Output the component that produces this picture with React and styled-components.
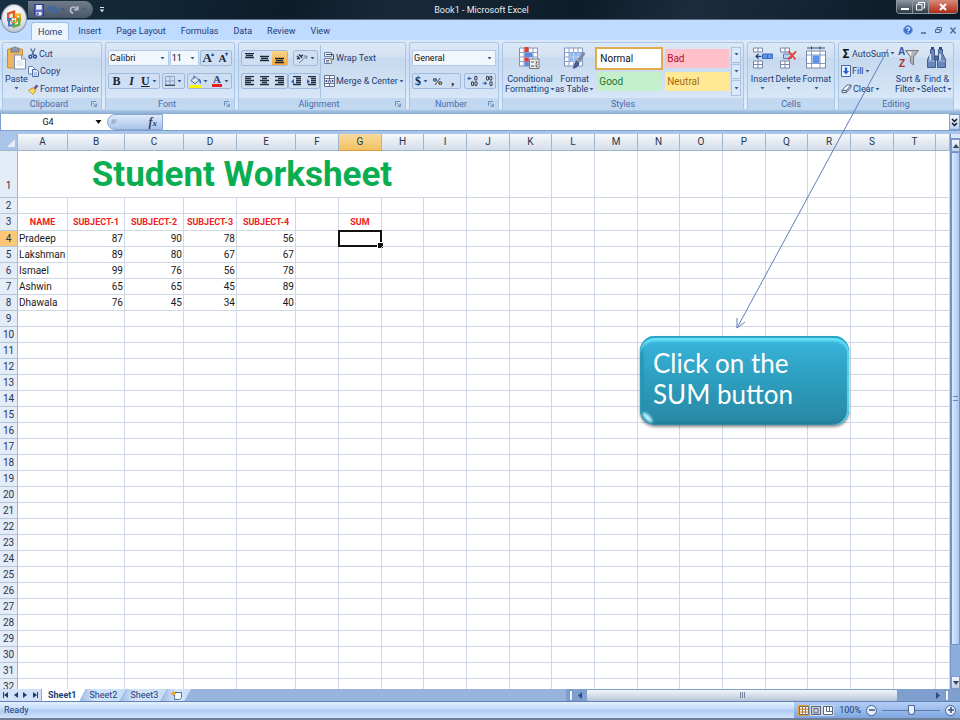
import React, { useState } from 'react'
import styled, { createGlobalStyle } from 'styled-components'

const uiFont = 'Roboto, "Liberation Sans", sans-serif'

const rows = [
  ['Pradeep', 87, 90, 78, 56],
  ['Lakshman', 89, 80, 67, 67],
  ['Ismael', 99, 76, 56, 78],
  ['Ashwin', 65, 65, 45, 89],
  ['Dhawala', 76, 45, 34, 40],
]
const columns = 'ABCDEFGHIJKLMNOPQRST'.split('')
const widths = [50, 57, 59, 53, 59, 43, 43, 42, 43, 43, 42, 43, 43, 42, 43, 43, 42, 43, 43, 42]
const headings = ['NAME', 'SUBJECT-1', 'SUBJECT-2', 'SUBJECT-3', 'SUBJECT-4', '', 'SUM']
const tabs = ['Home', 'Insert', 'Page Layout', 'Formulas', 'Data', 'Review', 'View']

/* ---------- icons ---------- */

const Caret = () => (
  <svg width="5" height="3" viewBox="0 0 5 3"><path d="M0.5 0h4L2.5 2.6z" fill="#3b5a8c" /></svg>
)

const OfficeLogo = () => (
  <svg width="18" height="20" viewBox="0 0 18 20" fill="none" strokeWidth="2.4">
    <path d="M6 11H3.2V4.5L9 2.6v7" stroke="#e2571c" />
    <path d="M11 8V5.6h4v6h-3" stroke="#f2b21c" />
    <path d="M7 10H4v6.5h4V14" stroke="#3f74c8" strokeWidth="2" />
    <path d="M9 11v6.6l5.2-2V10H11" stroke="#5fae3c" />
    <path d="M6.5 8.5h5v5h-5z" stroke="#e88a2a" strokeWidth="1" />
  </svg>
)

const SaveIcon = () => (
  <svg width="10" height="12" viewBox="0 0 10 12">
    <path d="M0.5 0.5h9v11h-8l-1-1z" fill="#5a6cc8" stroke="#2e3b8c" />
    <path d="M2.2 1h5.6v4.6H2.2z" fill="#e8eefc" />
    <path d="M2.5 8h5v3.5h-5z" fill="#fff" />
    <path d="M3.2 8.6h1.4v2.4H3.2z" fill="#2e3b8c" />
  </svg>
)

const UndoIcon = ({ color = '#3a63b5', flip = false }) => (
  <svg width="10" height="11" viewBox="0 0 11 11">
    <g transform={flip ? 'matrix(-1 0 0 1 11 0)' : undefined} fill="none" stroke={color} strokeWidth="1.8">
      <path d="M2 5C4 1.6 9.6 2 9.4 6c0 2-1.4 3.2-3 3.6" />
      <path d="M1.4 1.6v4h4" />
    </g>
  </svg>
)

const PasteIcon = () => (
  <svg width="19" height="23" viewBox="0 0 19 23">
    <rect x="0.5" y="2.5" width="15" height="19" rx="1" fill="#efb55c" stroke="#c98a34" />
    <path d="M4 1.5h2l1-1h2l1 1h2v4H4z" fill="#8f9aa8" stroke="#646f80" strokeWidth="0.7" />
    <path d="M7.5 8.5h7l4 4v10h-11z" fill="#fff" stroke="#7c8fb0" />
    <path d="M14.5 8.5v4h4" fill="#dbe6f6" stroke="#7c8fb0" />
    <path d="M9.5 14.5h6M9.5 16.5h7M9.5 18.5h7" stroke="#cbd6e8" />
  </svg>
)

const CutIcon = () => (
  <svg width="10" height="11" viewBox="0 0 10 11" fill="none">
    <path d="M2.6 0.5l3.6 6.7M7 0.5L3.8 7.2" stroke="#5b6f94" strokeWidth="1.3" />
    <circle cx="2.4" cy="8.6" r="1.5" stroke="#27509c" strokeWidth="1.4" />
    <circle cx="7" cy="8.6" r="1.5" stroke="#27509c" strokeWidth="1.4" />
  </svg>
)

const CopyIcon = () => (
  <svg width="11" height="11" viewBox="0 0 11 11">
    <path d="M0.5 0.5h4l2 2v5.5h-6z" fill="#f4f8ff" stroke="#6480b4" />
    <path d="M4.5 3.5h4l2 2v5h-6z" fill="#dce8fb" stroke="#4a68a4" />
    <path d="M6 7h3M6 8.8h3" stroke="#7d9bd0" strokeWidth="0.8" />
  </svg>
)

const PainterIcon = () => (
  <svg width="11" height="11" viewBox="0 0 11 11">
    <path d="M8 0.5l2.5 1.6-3 3.4-1.8-1.6z" fill="#6b4fa0" />
    <path d="M0.5 6.2l4.6-2.6 3 3-3.4 4z" fill="#f3c844" stroke="#b98a1c" strokeWidth="0.7" />
    <path d="M2 8l3-2.6M3.6 9.4l2.6-3" stroke="#fff2b0" strokeWidth="0.8" />
  </svg>
)

const BorderIcon = () => (
  <svg width="10" height="10" viewBox="0 0 10 10">
    <path d="M0.5 0.5h9v8.5h-9zM5 0.5V9M0.5 5h9" fill="none" stroke="#8ea3c6" />
    <path d="M0 9.3h10" stroke="#3d4a64" strokeWidth="1.2" />
  </svg>
)

const FillColorIcon = () => (
  <svg width="11" height="13" viewBox="0 0 11 13">
    <path d="M1 5.5L5 1.5l4 3.8-4 3.4z" fill="#dde8f8" stroke="#4d6796" />
    <path d="M4 0.5v3.5" stroke="#4d6796" />
    <path d="M8.6 4.2c1.6.8 2 2.2 1.6 4.2" stroke="#3e6fc4" strokeWidth="1.5" fill="none" />
    <path d="M0 10h11v3H0z" fill="#fff200" />
  </svg>
)

/* rows of text bars; each entry is [start, end] */
const BarsIcon = ({ bars, top = 0, step = 2, arrow }) => (
  <svg width="11" height="11" viewBox="0 0 11 11">
    {bars.map(([from, to], i) => (
      <path key={i} d={`M${from} ${top + i * step + 0.5}H${to}`} stroke="#232a38" strokeWidth="1.3" />
    ))}
    {arrow && <path d={arrow} fill="#2f5fb8" />}
  </svg>
)

const OrientIcon = () => (
  <svg width="12" height="11" viewBox="0 0 12 11" fill="none" stroke="#2b3346">
    <path d="M1 3l3 3M3 1.5l3.2 3.2M1 6.2l2-1M5 3.2l2-1.4" strokeWidth="1.4" />
    <path d="M3 10L10.4 3.4M10.8 6V3H7.6" stroke="#6d7c98" />
  </svg>
)

const WrapIcon = () => (
  <svg width="11" height="12" viewBox="0 0 11 12">
    <path d="M0.5 0.5h7v4h-7zM0.5 6.5h7v5h-7z" fill="#eef4fd" stroke="#6b7fa4" />
    <path d="M2 2.5h7.5v5H7" fill="none" stroke="#454f66" />
    <path d="M2 8.5h3.5M2 10h3" stroke="#454f66" strokeWidth="0.8" />
    <path d="M8 5.5L5.6 7.5 8 9.5z" fill="#e0a030" />
  </svg>
)

const MergeIcon = () => (
  <svg width="11" height="12" viewBox="0 0 11 12">
    <path d="M0.5 0.5h10v11h-10zM0.5 3.5h10M0.5 8.5h10M5.5 0.5v3M5.5 8.5v3" fill="#f4f8ff" stroke="#66738e" />
    <path d="M1 6l2.2-1.4v2.8zM10 6L7.8 4.6v2.8z" fill="#26396a" />
    <path d="M4.4 7.6L5.5 4.4l1.1 3.2" fill="none" stroke="#26396a" strokeWidth="0.9" />
  </svg>
)

const DecimalIcon = ({ less = false }) => (
  <svg width="11" height="12" viewBox="0 0 12 12" fill="none" strokeWidth="1.1">
    <path d={less ? 'M0.6 8.5h4M3 6.8l1.8 1.7L3 10.2' : 'M5 3.2H1M2.8 1.5L1 3.2l1.8 1.7'} stroke="#2f5fb8" />
    <ellipse cx="9.6" cy="3" rx="1.3" ry="2.1" stroke="#333b4c" />
    {less ? <ellipse cx="6" cy="3" rx="1.2" ry="2.1" stroke="#333b4c" /> : <ellipse cx="6" cy="9" rx="1.2" ry="2.1" stroke="#333b4c" />}
    <ellipse cx="9.8" cy="9" rx="1.3" ry="2.1" stroke="#333b4c" />
  </svg>
)

const GridBase = () => (
  <>
    <path d="M0.5 1.5h18v18h-18z" fill="#fafcff" stroke="#8291b4" />
    <path d="M5 1.5v18M9.5 1.5v18M14 1.5v18M0.5 6h18M0.5 10.5h18M0.5 15h18" stroke="#8ea2cc" />
  </>
)

const ConditionalIcon = () => (
  <svg width="21" height="23" viewBox="0 0 21 23">
    <GridBase />
    <path d="M5.5 0.5h4v5h-4zM5.5 11h4v4h-4z" fill="#e5372c" />
    <path d="M5.5 6.5h8v4h-8zM5.5 15.5h4v4h-4z" fill="#5b8be0" />
    <path d="M10.5 12.5h9.5v9.5h-9.5z" fill="#f1f1f1" stroke="#777" />
    <path d="M12 15.5h3M12 19.5h3M16.5 14.5l2 1.4-2 1.4M18.5 18l-2 1.4 2 1.4" stroke="#333" fill="none" strokeWidth="0.9" />
  </svg>
)

const FormatTableIcon = () => (
  <svg width="21" height="23" viewBox="0 0 21 23">
    <GridBase />
    <path d="M5.5 6.5h13v9h-13z" fill="#82abed" opacity="0.85" />
    <path d="M5.5 10.5h13M9.5 6v10M14 6v10" stroke="#d3e2fa" strokeWidth="0.8" />
    <path d="M20 5.5l-7 8.5 2 1.8 5.6-8z" fill="#8a8f9e" stroke="#555d70" strokeWidth="0.5" />
    <path d="M13 14.2l2.2 2c-.4 3.4-3 5.4-6.2 5.6 1.6-1.8.8-6 4-7.6z" fill="#3f5f9e" stroke="#2b4378" strokeWidth="0.5" />
    <path d="M13.5 13.5l2 1.8" stroke="#e0a848" strokeWidth="1.4" />
  </svg>
)

const InsertIcon = () => (
  <svg width="21" height="23" viewBox="0 0 21 23">
    <path d="M1.5 1.5h9v4h-9zM6 1.5v4M1.5 14.5h9v7h-9zM6 14.5v7M1.5 18h9" fill="#fff" stroke="#7686a8" />
    <path d="M10.5 7.5h10v4.5h-10zM15.5 7.5v4.5" fill="#5c92ea" stroke="#3f6ab8" />
    <path d="M9.5 9.8H4M6.5 7.4L4 9.8l2.5 2.4" fill="none" stroke="#24407c" strokeWidth="1.3" />
  </svg>
)

const DeleteIcon = () => (
  <svg width="21" height="23" viewBox="0 0 21 23">
    <path d="M2.5 1.5h9v4h-9zM7 1.5v4M2.5 14.5h9v7h-9zM7 14.5v7M2.5 18h9" fill="#fff" stroke="#7686a8" />
    <path d="M5.5 7.5h8v4.5h-8z" fill="#bcd2f4" stroke="#5f7cb4" />
    <path d="M10.5 4.5l7 8.5M18 5l-8 8" stroke="#ea4030" strokeWidth="1.8" />
  </svg>
)

const FormatIcon = () => (
  <svg width="21" height="23" viewBox="0 0 21 23">
    <path d="M0.5 4.5h19v17h-19z" fill="#fff" stroke="#7686a8" />
    <path d="M5.5 4.5v17M14 4.5v17M0.5 8.5h19M0.5 17h19" stroke="#8a99ba" />
    <path d="M6.5 9h7v7.5h-7z" fill="#5c92ea" />
    <path d="M1 1.5h18M5.5 0v3M14 0v3" stroke="#3b4a6c" />
  </svg>
)

const FillIcon = () => (
  <svg width="10" height="12" viewBox="0 0 10 12">
    <path d="M0.5 0.5h9v11h-9z" fill="#eaf2ff" stroke="#4869b0" />
    <path d="M3.8 2.5h2.4V6h2L5 9.5 1.8 6h2z" fill="#2c62cc" />
  </svg>
)

const ClearIcon = () => (
  <svg width="11" height="10" viewBox="0 0 11 10">
    <path d="M1 6.4L6 1h4L5.4 6.4z" fill="#fff" stroke="#5a6680" />
    <path d="M1 6.4h4.4v2.2H1z" fill="#dfe3ea" stroke="#5a6680" />
    <path d="M5.4 8.6L10 3.2V1" fill="none" stroke="#5a6680" />
  </svg>
)

const SortIcon = () => (
  <svg width="21" height="24" viewBox="0 0 21 24" fontFamily="Liberation Sans" fontWeight="bold" fontSize="10">
    <path d="M7.5 4.5h13l-5 6.5v8l-3-2.5V11z" fill="#b4b4b6" stroke="#77797f" />
    <path d="M9.5 5.5h4l-.5 5z" fill="#eeeeef" />
    <text x="0" y="9" fill="#2d59a8">A</text>
    <text x="1" y="21" fill="#a8332c">Z</text>
  </svg>
)

const FindIcon = () => (
  <svg width="19" height="22" viewBox="0 0 19 22" stroke="#2f4978" strokeWidth="0.8">
    <path d="M3.5 2.5h4v5l1 4v9h-8v-8l3-6z" fill="#6886bb" />
    <path d="M11.5 2.5h4v4l3 6v8h-8v-9l1-4z" fill="#6886bb" />
    <path d="M7.5 9h4v4h-4z" fill="#4a699f" />
    <path d="M1 14h7M11 14h7" stroke="#b7c9e6" />
    <path d="M3.2 7v6M13 7v6" stroke="#dde8f8" strokeWidth="1.6" />
    <path d="M4 1h3M12 1h3" strokeWidth="1.8" />
  </svg>
)

const HelpIcon = () => (
  <svg width="10" height="10" viewBox="0 0 10 10" fill="none">
    <circle cx="5" cy="5" r="4.4" fill="#3b72d4" stroke="#7c9cd2" />
    <path d="M3.4 3.8c.2-2 3.4-1.7 3.2.2C6.5 5 5 5 5 6.2M5 7.2v1" stroke="#fff" strokeWidth="1.1" />
  </svg>
)

const LauncherIcon = () => (
  <svg width="6" height="6" viewBox="0 0 6 6" fill="none" stroke="#6d8fc0">
    <path d="M0.5 5V0.5H5M2 2l3 3M5.4 2.6v2.8H2.6" />
  </svg>
)

const NewSheetIcon = () => (
  <svg width="11" height="9" viewBox="0 0 11 9">
    <path d="M3.5 1.5h7v5l-2 2h-5z" fill="#f4f8ff" stroke="#5d7096" />
    <path d="M2.5 0v5M0 2.5h5M0.8 0.8l3.4 3.4M4.2 0.8L0.8 4.2" stroke="#f0a42c" />
  </svg>
)

const ViewIcon = ({ kind }) => (
  <svg width="10" height="9" viewBox="0 0 10 9" fill="none" stroke="#5f6678">
    <path d="M0.5 0.5h9v8h-9z" fill="#fff" />
    {kind === 'grid' && <path d="M3.5 0v9M6.5 0v9M0 3.2h10M0 6h10" stroke="#b07830" />}
    {kind === 'page' && <path d="M0.5 0.5h9v8h-9zM3 2.5h4v4.5H3z" fill="#c9d0dc" />}
    {kind === 'break' && <path d="M3.5 0v5.5h3V0M6.5 5.5H10" />}
  </svg>
)

/* ---------- small pieces ---------- */

const Big = ({ icon, lines, caret, tight }) => (
  <BigButton $tight={tight}>
    {icon}
    {lines.map((line, i) => (
      <span key={line}>{line}{!caret && i === lines.length - 1 && <Caret />}</span>
    ))}
    {caret && <i><Caret /></i>}
  </BigButton>
)

const Drop = ({ label, value, grow }) => (
  <DropWrap $grow={grow}>
    <select aria-label={label} defaultValue={value}>
      <option>{value}</option>
    </select>
    <Caret />
  </DropWrap>
)

const Panel = ({ title, launcher, children }) => (
  <Group>
    <GroupBody>{children}</GroupBody>
    <GroupTitle>
      <span>{title}</span>
      {launcher && <Launcher aria-label={`${title} options`}><LauncherIcon /></Launcher>}
    </GroupTitle>
  </Group>
)

const App = () => {
  const [style, setStyle] = useState('Normal')
  const [zoom, setZoom] = useState(50)

  // content of one cell below the title row
  const renderCell = (row, col) => {
    if (row === 3) {
      return <Cell key={col} $head>{headings[col]}</Cell>
    }
    const data = rows[row - 4]
    if (row === 4 && col === 6) {
      return <Cell key={col} $active><b /></Cell>
    }
    return <Cell key={col} $num={col > 0}>{data ? data[col] : ''}</Cell>
  }

  return (
    <Shell>
      <Global />
      <TitleBar>
        <OfficeButton aria-label="Office"><OfficeLogo /></OfficeButton>
        <QuickAccess>
          <button aria-label="Save"><SaveIcon /></button>
          <button aria-label="Undo"><UndoIcon /><Caret /></button>
          <button aria-label="Redo"><UndoIcon color="#b3bccb" flip /><Caret /></button>
        </QuickAccess>
        <Customize aria-label="Customize">
          <svg width="6" height="6" viewBox="0 0 6 6"><path d="M1 0.5h4" stroke="#dfe7f2" /><path d="M0.8 2.5h4.4L3 5.2z" fill="#dfe7f2" /></svg>
        </Customize>
        <h1>Book1 - Microsoft Excel</h1>
        <WindowButtons>
          <button aria-label="Minimize"><svg width="8" height="9"><path d="M0 7h8" stroke="#fff" strokeWidth="2" /></svg></button>
          <button aria-label="Restore"><svg width="9" height="9" fill="none" stroke="#fff"><path d="M2.5 2V0.5h6V6H7M0.5 2.5H6V8H0.5z" /></svg></button>
          <button aria-label="Close"><svg width="8" height="8"><path d="M1 1l6 6M7 1L1 7" stroke="#fff" strokeWidth="2" /></svg></button>
        </WindowButtons>
      </TitleBar>

      <TabBar>
        <nav>
          {tabs.map((tab) => <Tab key={tab} $on={tab === 'Home'}>{tab}</Tab>)}
        </nav>
        <DocButtons>
          <button aria-label="Help"><HelpIcon /></button>
          <button aria-label="Minimize workbook"><svg width="6" height="7"><path d="M0 6h5" stroke="#51678e" strokeWidth="1.5" /></svg></button>
          <button aria-label="Restore workbook"><svg width="7" height="7" fill="none" stroke="#51678e"><path d="M2 2V0.5h4.5V4H5M0.5 2.5H5v3H0.5z" /></svg></button>
          <button aria-label="Close workbook"><svg width="6" height="7"><path d="M0.5 0.5l5 6M5.5 0.5l-5 6" stroke="#51678e" strokeWidth="1.2" /></svg></button>
        </DocButtons>
      </TabBar>

      <Ribbon>
        <Panel title="Clipboard" launcher>
          <Big icon={<PasteIcon />} lines={['Paste']} caret />
          <Stack>
            <Small><CutIcon />Cut</Small>
            <Small><CopyIcon />Copy</Small>
            <Small><PainterIcon />Format Painter</Small>
          </Stack>
        </Panel>

        <Panel title="Font" launcher>
          <Lines>
            <Line>
              <Drop label="Font" value="Calibri" grow={65} />
              <Drop label="Font size" value="11" grow={28} />
              <Strip>
                <Tool $size={13} aria-label="Grow font">A<sup>▴</sup></Tool>
                <Tool $size={11} aria-label="Shrink font">A<sup>▾</sup></Tool>
              </Strip>
            </Line>
            <Line>
              <Strip>
                <Tool $size={12}>B</Tool>
                <Tool $size={12}><em>I</em></Tool>
                <Tool $size={12}><u>U</u><Caret /></Tool>
              </Strip>
              <Strip><Tool aria-label="Borders"><BorderIcon /><Caret /></Tool></Strip>
              <Strip>
                <Tool aria-label="Fill color"><FillColorIcon /><Caret /></Tool>
                <Tool $size={11} aria-label="Font color"><FontColor>A</FontColor><Caret /></Tool>
              </Strip>
            </Line>
          </Lines>
        </Panel>

        <Panel title="Alignment" launcher>
          <Lines $side>
            <Line>
              <Strip>
                <Tool aria-label="Top align"><BarsIcon bars={[[1, 10], [2, 9], [1, 10]]} /></Tool>
                <Tool aria-label="Middle align"><BarsIcon bars={[[1, 10], [2, 9], [1, 10]]} top={3} /></Tool>
                <Tool $on aria-label="Bottom align"><BarsIcon bars={[[1, 10], [2, 9], [1, 10]]} top={5} /></Tool>
              </Strip>
              <Strip><Tool aria-label="Orientation"><OrientIcon /><Caret /></Tool></Strip>
            </Line>
            <Line>
              <Strip>
                <Tool aria-label="Align left"><BarsIcon bars={[[1, 10], [1, 7], [1, 10], [1, 7], [1, 10]]} /></Tool>
                <Tool aria-label="Center"><BarsIcon bars={[[1, 10], [3, 8], [1, 10], [3, 8], [1, 10]]} /></Tool>
                <Tool aria-label="Align right"><BarsIcon bars={[[1, 10], [4, 10], [1, 10], [4, 10], [1, 10]]} /></Tool>
              </Strip>
              <Strip>
                <Tool aria-label="Decrease indent"><BarsIcon bars={[[2, 10], [5, 10], [5, 10], [5, 10], [2, 10]]} arrow="M0 5.5l3-2.5v5z" /></Tool>
                <Tool aria-label="Increase indent"><BarsIcon bars={[[2, 10], [5, 10], [5, 10], [5, 10], [2, 10]]} arrow="M4 5.5L1 3v5z" /></Tool>
              </Strip>
            </Line>
          </Lines>
          <Lines $rule>
            <Line><Small><WrapIcon />Wrap Text</Small></Line>
            <Line><Small><MergeIcon />Merge &amp; Center<Caret /></Small></Line>
          </Lines>
        </Panel>

        <Panel title="Number" launcher>
          <Lines>
            <Line><Drop label="Number format" value="General" grow={84} /></Line>
            <Line>
              <Strip>
                <Tool $size={12}>$<Caret /></Tool>
                <Tool $size={11}>%</Tool>
                <Tool $size={13} aria-label="Comma style">,</Tool>
              </Strip>
              <Strip>
                <Tool aria-label="Increase decimal"><DecimalIcon /></Tool>
                <Tool aria-label="Decrease decimal"><DecimalIcon less /></Tool>
              </Strip>
            </Line>
          </Lines>
        </Panel>

        <Panel title="Styles">
          <Big tight icon={<ConditionalIcon />} lines={['Conditional', 'Formatting']} />
          <Big tight icon={<FormatTableIcon />} lines={['Format', 'as Table']} />
          <Gallery>
            {[['Normal', '#fff', '#111'], ['Bad', '#ffc0cb', '#b5122b'], ['Good', '#c4efcb', '#1d7432'], ['Neutral', '#ffe995', '#a8690c']].map(([name, bg, ink]) => (
              <Swatch key={name} $bg={bg} $ink={ink} $on={style === name} onClick={() => setStyle(name)}>{name}</Swatch>
            ))}
          </Gallery>
          <GalleryScroll>
            <button aria-label="Previous styles"><Caret /></button>
            <button aria-label="Next styles"><Caret /></button>
            <button aria-label="More styles"><Caret /></button>
          </GalleryScroll>
        </Panel>

        <Panel title="Cells">
          <Big icon={<InsertIcon />} lines={['Insert']} caret />
          <Big icon={<DeleteIcon />} lines={['Delete']} caret />
          <Big icon={<FormatIcon />} lines={['Format']} caret />
        </Panel>

        <Panel title="Editing">
          <Stack>
            <Small><Sigma>Σ</Sigma>AutoSum<Caret /></Small>
            <Small><FillIcon />Fill <Caret /></Small>
            <Small><ClearIcon />Clear <Caret /></Small>
          </Stack>
          <Big icon={<SortIcon />} lines={['Sort &', 'Filter']} />
          <Big icon={<FindIcon />} lines={['Find &', 'Select']} />
        </Panel>
      </Ribbon>

      <FormulaBar>
        <NameBox>
          <input aria-label="Name box" defaultValue="G4" />
          <svg width="7" height="4" viewBox="0 0 7 4"><path d="M0.5 0h6l-3 4z" fill="#111" /></svg>
        </NameBox>
        <FxButton aria-label="Insert function"><span /><em>f<small>x</small></em></FxButton>
        <input aria-label="Formula" />
        <Expand aria-label="Expand formula bar">
          <svg width="7" height="9" fill="none" stroke="#111" strokeWidth="1.4"><path d="M1 1l2.5 2.5L6 1M1 5l2.5 2.5L6 5" /></svg>
        </Expand>
      </FormulaBar>

      <Workspace>
        <Sheet>
          <Grid>
            <colgroup>
              <col style={{ width: 18 }} />
              {widths.map((w, i) => <col key={i} style={{ width: w }} />)}
              <col />
            </colgroup>
            <thead>
              <tr>
                <Corner><svg width="8" height="8"><path d="M8 0v8H0z" fill="#e6eefb" /></svg></Corner>
                {columns.map((c) => <ColHead key={c} $on={c === 'G'}>{c}</ColHead>)}
                <ColHead />
              </tr>
            </thead>
            <tbody>
              <tr>
                <RowHead $tall>1</RowHead>
                <Banner colSpan={9}>Student Worksheet</Banner>
                {columns.slice(9).map((c) => <Cell key={c} />)}
                <Cell />
              </tr>
              {Array.from({ length: 31 }, (_, i) => i + 2).map((row) => (
                <tr key={row}>
                  <RowHead $on={row === 4}>{row}</RowHead>
                  {columns.map((_, col) => renderCell(row, col))}
                  <Cell />
                </tr>
              ))}
            </tbody>
          </Grid>
        </Sheet>
        <VScroll>
          <SplitBox />
          <ScrollButton aria-label="Scroll up"><svg width="6" height="4"><path d="M3 0l3 4H0z" fill="#33435f" /></svg></ScrollButton>
          <VThumb><span /></VThumb>
          <VTrack />
          <ScrollButton aria-label="Scroll down"><svg width="6" height="4"><path d="M0 0h6L3 4z" fill="#33435f" /></svg></ScrollButton>
        </VScroll>
      </Workspace>

      <SheetBar>
        <SheetNav>
          <button aria-label="First sheet"><svg width="5" height="6"><path d="M0 0h1v6H0zM5 0v6L1 3z" fill="#1c3d78" /></svg></button>
          <button aria-label="Previous sheet"><svg width="4" height="6"><path d="M4 0v6L0 3z" fill="#1c3d78" /></svg></button>
          <button aria-label="Next sheet"><svg width="4" height="6"><path d="M0 0v6l4-3z" fill="#1c3d78" /></svg></button>
          <button aria-label="Last sheet"><svg width="5" height="6"><path d="M4 0h1v6H4zM0 0v6l4-3z" fill="#1c3d78" /></svg></button>
        </SheetNav>
        <SheetTab $on>Sheet1</SheetTab>
        <SheetTab>Sheet2</SheetTab>
        <SheetTab>Sheet3</SheetTab>
        <SheetTab aria-label="New sheet"><NewSheetIcon /></SheetTab>
        <HScroll>
          <Handle />
          <button aria-label="Scroll left"><svg width="4" height="7"><path d="M4 0v7L0 3.5z" fill="#2c4a7c" /></svg></button>
          <HThumb><span /></HThumb>
          <HTrack />
          <button aria-label="Scroll right"><svg width="4" height="7"><path d="M0 0v7l4-3.5z" fill="#2c4a7c" /></svg></button>
          <Handle />
        </HScroll>
      </SheetBar>

      <StatusBar>
        <span>Ready</span>
        <StatusTools>
          <ViewButtons>
            <ViewButton $on aria-label="Normal view"><ViewIcon kind="grid" /></ViewButton>
            <ViewButton aria-label="Page layout view"><ViewIcon kind="page" /></ViewButton>
            <ViewButton aria-label="Page break preview"><ViewIcon kind="break" /></ViewButton>
          </ViewButtons>
          <span>100%</span>
          <Round aria-label="Zoom out"><svg width="6" height="6"><path d="M0 3h6" stroke="#3c4f78" strokeWidth="1.5" /></svg></Round>
          <input type="range" aria-label="Zoom" value={zoom} onChange={(e) => setZoom(e.target.value)} />
          <Round aria-label="Zoom in"><svg width="6" height="6"><path d="M0 3h6M3 0v6" stroke="#3c4f78" strokeWidth="1.5" /></svg></Round>
        </StatusTools>
      </StatusBar>

      <Pointer width="155" height="284" viewBox="0 0 155 284">
        <path d="M153 1L2 280M2 270v10l8-6" fill="none" stroke="#5b7fba" />
      </Pointer>
      <Callout>Click on the SUM button</Callout>
    </Shell>
  )
}

export default App

const Global = createGlobalStyle`
  body {
    margin: 0;
    background: #fff;
  }
  * {
    box-sizing: border-box;
  }
  button, input, select {
    font: inherit;
    color: inherit;
    border: none;
    background: none;
    padding: 0;
    margin: 0;
    min-width: 0;
    outline: none;
  }
  svg {
    flex: none;
    display: block;
  }
`

const Shell = styled.div`
  position: relative;
  display: flex;
  flex-direction: column;
  height: 100vh;
  overflow: hidden;
  font: 9px/12px ${uiFont};
  color: #1e3c77;
  border-bottom: 2px solid #6f7f96;
`

const TitleBar = styled.header`
  display: flex;
  align-items: center;
  height: 20px;
  flex: none;
  padding-left: 28px;
  background: linear-gradient(105deg, #17303f 0%, #0c1c2b 30%, #182a3a 42%, #0d1c2a 60%, #1a2c3d 72%, #0a1826 100%);
  border-bottom: 1px solid #5f7286;
  h1 {
    flex: 1;
    margin: 0;
    padding-right: 38px;
    font-size: 9px;
    font-weight: normal;
    text-align: center;
    color: #e6ebf0;
  }
`

const OfficeButton = styled.button`
  position: absolute;
  left: 1px;
  top: 4px;
  z-index: 2;
  display: flex;
  align-items: center;
  justify-content: center;
  width: 26px;
  height: 29px;
  border-radius: 50%;
  border: 1px solid #8795a8;
  background: radial-gradient(circle at 50% 30%, #fff, #e2e6ee 55%, #9fadc2);
`

const QuickAccess = styled.div`
  display: flex;
  align-items: center;
  gap: 4px;
  height: 17px;
  padding: 0 7px 0 6px;
  background: linear-gradient(#6f7c8a, #48566a);
  border-radius: 0 9px 9px 0;
  button {
    display: flex;
    align-items: center;
    gap: 2px;
  }
`

const Customize = styled.button`
  margin-left: 6px;
`

const WindowButtons = styled.div`
  display: flex;
  align-self: flex-start;
  margin-right: 2px;
  border: 1px solid #8d98a6;
  border-top: none;
  border-radius: 0 0 4px 4px;
  overflow: hidden;
  button {
    display: flex;
    align-items: center;
    justify-content: center;
    width: 16px;
    height: 13px;
    background: linear-gradient(#8f98a3, #2e3a48);
    border-right: 1px solid #8d98a6;
  }
  button:last-child {
    width: 28px;
    border: none;
    background: linear-gradient(#d98b7b, #b02c17);
  }
`

const TabBar = styled.div`
  display: flex;
  justify-content: space-between;
  height: 20px;
  flex: none;
  padding-left: 31px;
  background: #bfdbff;
  nav {
    display: flex;
    align-items: flex-end;
  }
`

const Tab = styled.button`
  height: 18px;
  padding: 0 6px;
  margin-right: 3px;
  border-radius: 3px 3px 0 0;
  ${(p) => p.$on && `
    background: #eef5fe;
    border: 1px solid #9dbce6;
    border-bottom: none;
  `}
`

const DocButtons = styled.div`
  display: flex;
  align-items: center;
  gap: 8px;
  padding-right: 4px;
`

const Ribbon = styled.div`
  display: grid;
  grid-template-columns:
    minmax(0, 100fr) minmax(0, 130fr) minmax(0, 168fr) minmax(0, 90fr)
    minmax(0, 242fr) minmax(0, 88fr) minmax(0, 116fr);
  gap: 3px;
  height: 74px;
  flex: none;
  padding: 2px 6px 3px 2px;
  background: linear-gradient(#dbe8f8, #c9dcf3 30%, #dfedfd 92%, #a3c0e0 96%, #8aaccf);
`

const Group = styled.section`
  display: flex;
  flex-direction: column;
  border: 1px solid #a9c5e6;
  border-radius: 3px;
  background: linear-gradient(#dde9f7 0, #d3e1f2 20%, #c7d9ee 24%, #dcebfb 100%);
  overflow: hidden;
  white-space: nowrap;
`

const GroupBody = styled.div`
  display: flex;
  flex: 1;
  justify-content: space-between;
  padding: 2px 2px 0;
`

const GroupTitle = styled.div`
  display: flex;
  align-items: center;
  height: 12px;
  padding: 0 4px;
  background: #c1d8f0;
  color: #4a6ba8;
  span {
    flex: 1;
    text-align: center;
  }
`

const Launcher = styled.button`
  width: 6px;
`

const BigButton = styled.button`
  display: flex;
  flex: ${(p) => (p.$tight ? 'none' : '1 0 auto')};
  flex-direction: column;
  align-items: center;
  line-height: 10px;
  > svg {
    height: 24px;
    margin: 1px 0 4px;
  }
  span {
    display: flex;
    align-items: center;
    gap: 1px;
  }
  i {
    padding-top: 3px;
  }
`

const Stack = styled.div`
  display: flex;
  flex: none;
  flex-direction: column;
  justify-content: space-around;
`

const Small = styled.button`
  display: flex;
  align-items: center;
  gap: 1px;
  height: 16px;
`

const Sigma = styled.b`
  width: 10px;
  font-size: 12px;
  color: #111;
`

const Lines = styled.div`
  display: flex;
  flex: 1 1 auto;
  flex-direction: column;
  gap: 7px;
  padding-top: 5px;
  ${(p) => p.$side && 'flex: none; width: 77px;'}
  ${(p) => p.$rule && 'border-left: 1px solid #a9c2e0; padding-left: 3px; margin-left: 2px;'}
`

const Line = styled.div`
  display: flex;
  justify-content: space-between;
  height: 16px;
`

const Strip = styled.div`
  display: flex;
  border: 1px solid #9fb9dc;
  border-radius: 2px;
  background: #cfdff3;
`

const Tool = styled.button`
  display: flex;
  align-items: center;
  justify-content: center;
  gap: 2px;
  min-width: 15px;
  padding: 0 2px;
  font: bold ${(p) => p.$size || 10}px/12px "Liberation Serif", serif;
  color: #1b2438;
  ${(p) => p.$on && 'background: linear-gradient(#fbd58f, #f5a83c);'}
  sup {
    font-size: 6px;
    line-height: 6px;
    align-self: flex-start;
    margin-left: -3px;
    color: #27509c;
  }
`

const FontColor = styled.span`
  line-height: 9px;
  padding: 0 1px;
  color: #2a4780;
  border-bottom: 3px solid #ee1c24;
`

const DropWrap = styled.label`
  display: flex;
  align-items: center;
  flex: ${(p) => p.$grow} 1 0;
  padding-right: 3px;
  border: 1px solid #b3cbe8;
  background: #f2f7fe;
  color: #111;
  margin-right: ${(p) => (p.$grow > 80 ? 0 : 1)}px;
  select {
    flex: 1;
    appearance: none;
    padding-left: 1px;
  }
`

const Gallery = styled.div`
  display: grid;
  flex: 1;
  grid-template-columns: 1fr 1fr;
  grid-template-rows: 23px 23px;
  padding-top: 2px;
  margin-left: 1px;
`

const Swatch = styled.button`
  text-align: left;
  margin: ${(p) => (p.$on ? 0 : '2px')};
  padding-left: ${(p) => (p.$on ? 3 : 2)}px;
  font-size: 10px;
  color: ${(p) => p.$ink};
  background: ${(p) => p.$bg};
  border: ${(p) => (p.$on ? '2px solid #e3aa4e' : 'none')};
`

const GalleryScroll = styled.div`
  display: flex;
  flex: none;
  flex-direction: column;
  gap: 1px;
  width: 10px;
  padding: 2px 0;
  button {
    display: flex;
    flex: 1;
    align-items: center;
    justify-content: center;
    border: 1px solid #a9c2e4;
    background: #dbe8f8;
  }
`

const FormulaBar = styled.div`
  display: flex;
  height: 17px;
  flex: none;
  background: #fff;
  color: #111;
  border-left: 1px solid #7d9fce;
  border-bottom: 1px solid #7d9fce;
  > input {
    flex: 1;
    padding: 0 4px;
  }
`

const NameBox = styled.div`
  display: flex;
  align-items: center;
  width: 106px;
  padding-right: 5px;
  input {
    flex: 1;
    text-align: center;
  }
`

const FxButton = styled.button`
  display: flex;
  align-items: center;
  justify-content: space-between;
  width: 56px;
  padding: 0 5px 0 3px;
  border-radius: 8px 0 0 8px;
  border: 1px solid #8ca8d2;
  background: linear-gradient(#dfeafa, #a9c3ea);
  font: bold 12px/12px "Liberation Serif", serif;
  color: #33425e;
  span {
    width: 7px;
    height: 7px;
    border-radius: 50%;
    background: radial-gradient(circle at 30% 30%, #8fa9d0, #dfe9f8);
  }
  small {
    font-size: 9px;
  }
`

const Expand = styled.button`
  display: flex;
  align-items: center;
  justify-content: center;
  width: 11px;
  border: 1px solid #7d9fce;
  background: linear-gradient(#eef5fe, #b9d0f2);
`

const Workspace = styled.main`
  display: flex;
  flex: 1;
  min-height: 0;
  border-top: 3px solid #a9c6e8;
`

const Sheet = styled.div`
  flex: 1;
  min-width: 0;
  overflow: hidden;
`

const Grid = styled.table`
  width: 100%;
  table-layout: fixed;
  border-collapse: separate;
  border-spacing: 0;
  font-size: 10px;
  line-height: 14px;
  td, th {
    height: 16px;
    padding: 0;
    font-weight: normal;
    overflow: hidden;
    white-space: nowrap;
  }
`

const Corner = styled.th`
  background: #a9c4e9;
  border-right: 1px solid #9eb6ce;
  border-bottom: 1px solid #9eb6ce;
  svg {
    margin: 2px 0 0 7px;
  }
`

const ColHead = styled.th`
  color: #27364f;
  background: ${(p) => (p.$on ? 'linear-gradient(#f9d99f, #f1c15f)' : 'linear-gradient(#f6f9fc, #d5dde9)')};
  border-right: 1px solid #9eb6ce;
  border-bottom: 1px solid ${(p) => (p.$on ? '#d99a3c' : '#9eb6ce')};
  && {
    height: 17px;
  }
`

const RowHead = styled.th`
  color: #27364f;
  background: ${(p) => (p.$on ? '#fbc774' : '#e4ecf7')};
  border-right: 1px solid #9eb6ce;
  border-bottom: 1px solid #b4c6dc;
  vertical-align: ${(p) => (p.$tall ? 'bottom' : 'middle')};
  && {
    padding-bottom: ${(p) => (p.$tall ? 4 : 0)}px;
  }
`

const Cell = styled.td`
  position: relative;
  color: ${(p) => (p.$head ? '#ee1c24' : '#1a1a1a')};
  text-align: ${(p) => (p.$head ? 'center' : p.$num ? 'right' : 'left')};
  border-right: 1px solid #d0d7e5;
  border-bottom: 1px solid #d0d7e5;
  && {
    padding: 0 1px;
    font-weight: ${(p) => (p.$head ? 'bold' : 'normal')};
    ${(p) => p.$head && 'height: 17px; font-size: 9px;'}
    ${(p) => p.$active && 'overflow: visible;'}
  }
  b {
    position: absolute;
    inset: -1px;
    border: 2px solid #111;
  }
  b::after {
    content: "";
    position: absolute;
    right: -3px;
    bottom: -3px;
    width: 5px;
    height: 5px;
    background: #111;
    border: solid #fff;
    border-width: 1px 0 0 1px;
  }
`

const Banner = styled.td`
  border-right: 1px solid #d0d7e5;
  border-bottom: 1px solid #d0d7e5;
  text-align: center;
  color: #0aae50;
  && {
    height: 47px;
    padding-top: 2px;
    font-size: 35px;
    line-height: 44px;
    font-weight: bold;
  }
`

const VScroll = styled.div`
  display: flex;
  flex-direction: column;
  width: 10px;
  background: #8daedb;
  border-left: 1px solid #7394c8;
`

const SplitBox = styled.div`
  height: 5px;
  background: #dbe8fa;
  border-bottom: 1px solid #7394c8;
`

const ScrollButton = styled.button`
  display: flex;
  align-items: center;
  justify-content: center;
  height: 13px;
  flex: none;
  background: linear-gradient(#f2f6fc, #c0cfe6);
  border: 1px solid #7f9aca;
`

const VThumb = styled.div`
  display: flex;
  flex: 94;
  align-items: center;
  justify-content: center;
  background: linear-gradient(90deg, #dbe8fb, #a9c8f3);
  border: 1px solid #6e92cd;
  border-radius: 1px;
  span {
    width: 5px;
    height: 5px;
    border: solid #6d87b5;
    border-width: 1px 0;
  }
`

const VTrack = styled.div`
  flex: 6;
`

const SheetBar = styled.div`
  display: flex;
  height: 13px;
  flex: none;
  background: #96b4de;
  border-bottom: 1px solid #6283b8;
`

const SheetNav = styled.div`
  display: flex;
  align-items: center;
  justify-content: space-around;
  width: 42px;
  background: #d2e1f7;
  border-right: 1px solid #8dabd6;
`

const SheetTab = styled.button`
  display: flex;
  align-items: center;
  padding: 0 9px 0 10px;
  margin-right: -6px;
  height: 12px;
  clip-path: polygon(7px 0, 100% 0, calc(100% - 7px) 100%, 0 100%);
  background: linear-gradient(90deg, #9dbbe6, #d5e5fb 16px, #c6dcf8);
  ${(p) => p.$on && `
    position: relative;
    font-weight: bold;
    padding-left: 6px;
    background: #fff;
    clip-path: polygon(0 0, 100% 0, calc(100% - 6px) 100%, 0 100%);
  `}
`

const HScroll = styled.div`
  display: flex;
  align-items: center;
  width: 41%;
  margin-left: auto;
  padding: 0 11px 0 3px;
  background: #7f9fcf;
  gap: 5px;
`

const Handle = styled.span`
  width: 4px;
  height: 11px;
  border: 1px solid #7d96bf;
  background: #f4f7fc;
`

const HThumb = styled.div`
  display: flex;
  flex: 311;
  align-items: center;
  justify-content: center;
  height: 11px;
  background: linear-gradient(#f3f6fa, #b6c4d6);
  border-radius: 1px;
  span {
    width: 5px;
    height: 6px;
    background: repeating-linear-gradient(90deg, #76849a 0 1px, transparent 1px 2px);
  }
`

const HTrack = styled.div`
  flex: 29;
`

const StatusBar = styled.footer`
  display: flex;
  align-items: center;
  justify-content: space-between;
  height: 16px;
  flex: none;
  padding-left: 4px;
  background: linear-gradient(#e3effe, #c3dafa 45%, #aecbf4 50%, #cfe2fb);
`

const StatusTools = styled.div`
  display: flex;
  align-items: center;
  gap: 5px;
  height: 100%;
  padding: 0 4px;
  background: linear-gradient(#b4cff6, #7ea6de);
  input {
    appearance: none;
    width: 58px;
    height: 10px;
    background: linear-gradient(#5c7cb4, #5c7cb4) center / 100% 1px no-repeat;
  }
  input::-webkit-slider-thumb {
    appearance: none;
    width: 7px;
    height: 10px;
    border: 1px solid #4d6797;
    border-radius: 1px 1px 4px 4px;
    background: #e9f1fd;
  }
`

const ViewButtons = styled.div`
  display: flex;
  background: #c9dbf5;
`

const ViewButton = styled.button`
  border: 1px solid ${(p) => (p.$on ? '#e0a23c' : 'transparent')};
  background: ${(p) => (p.$on ? '#fde3a0' : 'none')};
`

const Round = styled.button`
  display: flex;
  align-items: center;
  justify-content: center;
  width: 11px;
  height: 11px;
  border: 1px solid #46608f;
  border-radius: 50%;
  background: #e6effc;
`

const Pointer = styled.svg`
  position: absolute;
  left: 735px;
  top: 48px;
  pointer-events: none;
`

const Callout = styled.aside`
  position: absolute;
  left: 640px;
  top: 336px;
  width: 209px;
  height: 89px;
  padding: 12px 50px 0 13px;
  font: 26px/31px Lato, sans-serif;
  color: #fff;
  border-radius: 15px;
  background: linear-gradient(#39b6de, #2d9ebd 50%, #2887a3);
  box-shadow:
    0 2px 3px rgba(0, 0, 0, 0.45),
    inset 0 2px 1px #2a9fc4,
    inset 0 6px 3px -1px #6fe9fd,
    inset -2px 0 1px #5fd3ea,
    inset 3px 0 3px #2490b0,
    inset 0 -3px 3px #237c96;
  &::after {
    content: "";
    position: absolute;
    left: 1px;
    bottom: 5px;
    width: 13px;
    height: 5px;
    border-radius: 50%;
    background: #b9f4ff;
    filter: blur(1px);
    transform: rotate(45deg);
  }
`
